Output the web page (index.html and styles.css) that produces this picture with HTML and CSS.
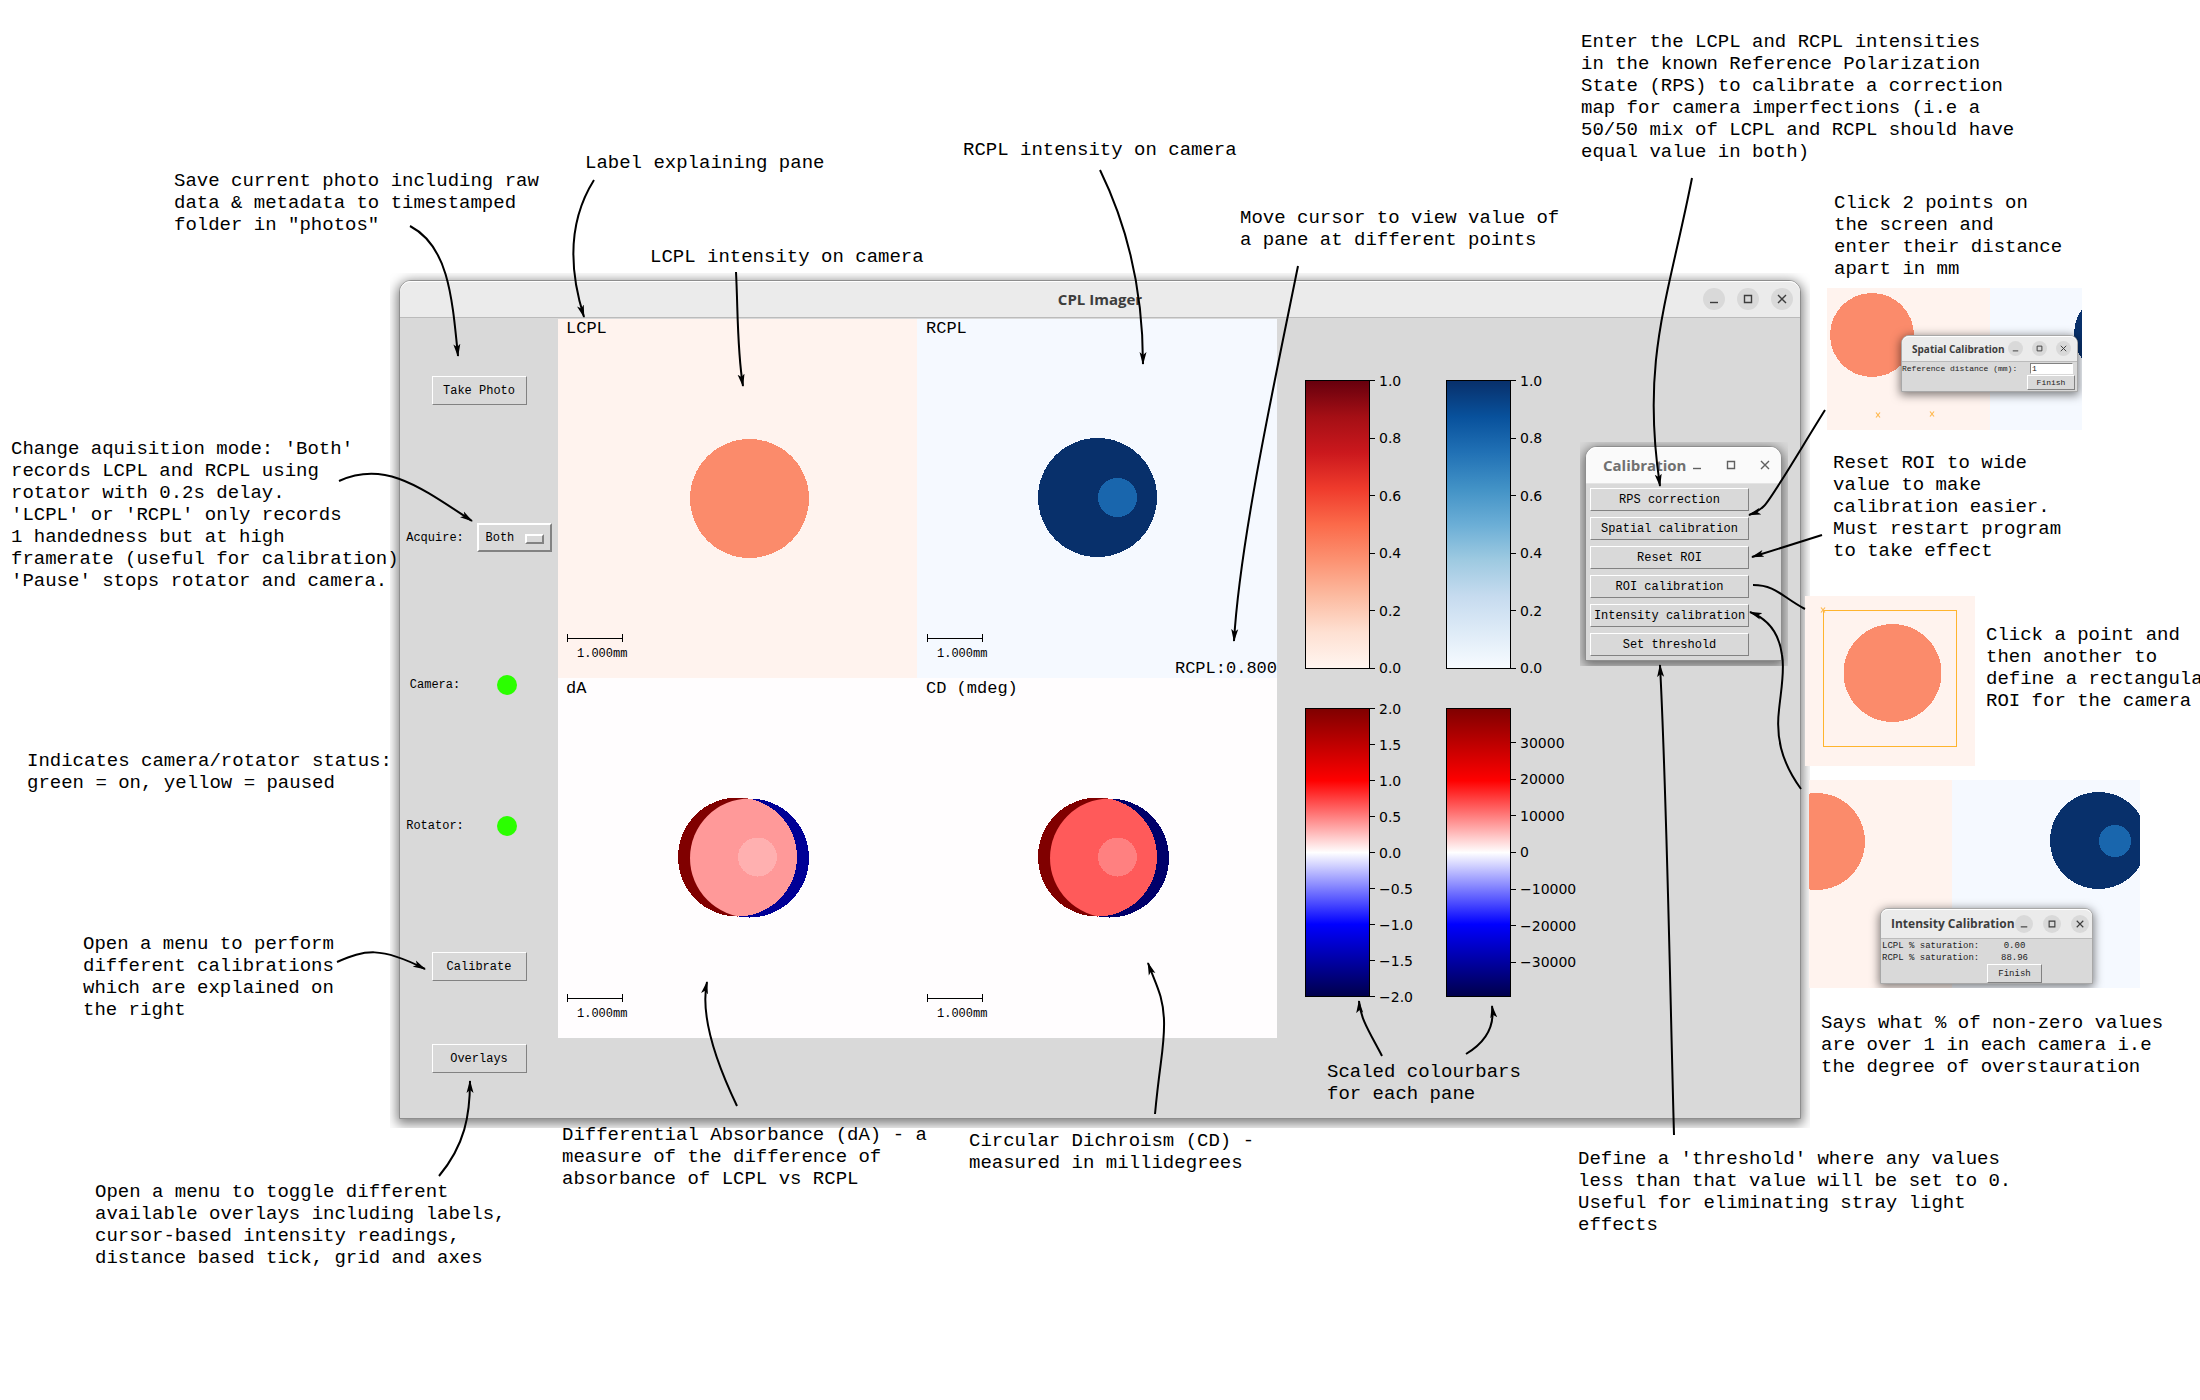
FILE: index.html
```html
<!DOCTYPE html>
<html lang="en">
<head>
<meta charset="utf-8">
<title>CPL Imager guide</title>
<link rel="stylesheet" href="styles.css">
</head>
<body>
<svg class="defs" aria-hidden="true">
  <symbol id="i-min" viewBox="0 0 22 22"><path d="M7 14.500h8"/></symbol>
  <symbol id="i-max" viewBox="0 0 22 22"><path d="M7.500 7.500h7v7h-7z"/></symbol>
  <symbol id="i-close" viewBox="0 0 22 22"><path d="M7 7l8 8M15 7l-8 8"/></symbol>
  <symbol id="i-cross" viewBox="0 0 6 6"><path d="M1 0.500l4 5M5 0.500l-4 5"/></symbol>
</svg>
<main class="canvas">

  <div class="shade shade-main">
    <section class="window main-window">
      <header class="titlebar">
        <h1>CPL Imager</h1>
        <div class="controls">
          <button aria-label="Minimise"><svg><use href="#i-min"/></svg></button>
          <button aria-label="Maximise"><svg><use href="#i-max"/></svg></button>
          <button aria-label="Close"><svg><use href="#i-close"/></svg></button>
        </div>
      </header>
      <div class="workspace">
        <div class="sidebar">
          <div class="row single"><button class="tk">Take Photo</button></div>
          <div class="row">
            <label for="acquire">Acquire:</label>
            <span class="option"><select id="acquire"><option>Both</option><option>LCPL</option><option>RCPL</option><option>Pause</option></select></span>
          </div>
          <div class="row"><span>Camera:</span><i class="lamp"></i></div>
          <div class="row"><span>Rotator:</span><i class="lamp"></i></div>
          <div class="row single"><button class="tk">Calibrate</button></div>
          <div class="row single"><button class="tk">Overlays</button></div>
        </div>

        <div class="panes">
          <svg class="pane warm">
            <circle class="coral" cx="191.500" cy="179.500" r="59.500"/>
            <path class="ruler" d="M9.500 315v8M9.500 319.500h55M64.500 315v8"/>
            <text class="name" x="8" y="14">LCPL</text>
            <text class="unit" x="19" y="338">1.000mm</text>
          </svg>
          <svg class="pane cool">
            <circle class="navy" cx="180.500" cy="178.500" r="59.500"/>
            <circle class="azure" cx="200.500" cy="178.500" r="19.500"/>
            <path class="ruler" d="M10.500 315v8M10.500 319.500h55M65.500 315v8"/>
            <text class="name" x="9" y="14">RCPL</text>
            <text class="unit" x="20" y="338">1.000mm</text>
            <text class="name" x="360" y="354" text-anchor="end">RCPL:0.800</text>
          </svg>
          <svg class="pane">
            <clipPath id="over-a"><circle cx="191.500" cy="180" r="59.500"/></clipPath>
            <circle fill="#000096" cx="191.500" cy="180" r="59.500"/>
            <circle fill="#800000" cx="179.500" cy="179" r="59.500"/>
            <g clip-path="url(#over-a)"><circle fill="#ff9999" cx="179.500" cy="179" r="59.500"/></g>
            <circle fill="#ffb0b0" cx="199.500" cy="179" r="19.500"/>
            <path class="ruler" d="M9.500 316v8M9.500 320.500h55M64.500 316v8"/>
            <text class="name" x="8" y="15">dA</text>
            <text class="unit" x="19" y="339">1.000mm</text>
          </svg>
          <svg class="pane">
            <clipPath id="over-c"><circle cx="192.500" cy="180" r="59.500"/></clipPath>
            <circle fill="#00006a" cx="192.500" cy="180" r="59.500"/>
            <circle fill="#800000" cx="180.500" cy="179" r="59.500"/>
            <g clip-path="url(#over-c)"><circle fill="#ff5a5a" cx="180.500" cy="179" r="59.500"/></g>
            <circle fill="#ff8080" cx="200.500" cy="179" r="19.500"/>
            <path class="ruler" d="M10.500 316v8M10.500 320.500h55M65.500 316v8"/>
            <text class="name" x="9" y="15">CD (mdeg)</text>
            <text class="unit" x="20" y="339">1.000mm</text>
          </svg>
        </div>

        <div class="colourbars">
          <div class="bar"><div class="ramp reds"></div><ol><li>1.0</li><li>0.8</li><li>0.6</li><li>0.4</li><li>0.2</li><li>0.0</li></ol></div>
          <div class="bar"><div class="ramp blues"></div><ol><li>1.0</li><li>0.8</li><li>0.6</li><li>0.4</li><li>0.2</li><li>0.0</li></ol></div>
          <div class="bar"><div class="ramp seismic"></div><ol><li>2.0</li><li>1.5</li><li>1.0</li><li>0.5</li><li>0.0</li><li>−0.5</li><li>−1.0</li><li>−1.5</li><li>−2.0</li></ol></div>
          <div class="bar"><div class="ramp seismic"></div><ol class="inset"><li>30000</li><li>20000</li><li>10000</li><li>0</li><li>−10000</li><li>−20000</li><li>−30000</li></ol></div>
        </div>
      </div>
    </section>
  </div>

  <div class="shade shade-menu">
    <section class="window menu-window">
      <header class="titlebar">
        <h2>Calibration</h2>
        <div class="controls">
          <button aria-label="Minimise"><svg><use href="#i-min"/></svg></button>
          <button aria-label="Maximise"><svg><use href="#i-max"/></svg></button>
          <button aria-label="Close"><svg><use href="#i-close"/></svg></button>
        </div>
      </header>
      <div class="menu">
        <button class="tk">RPS correction</button>
        <button class="tk">Spatial calibration</button>
        <button class="tk">Reset ROI</button>
        <button class="tk">ROI calibration</button>
        <button class="tk">Intensity calibration</button>
        <button class="tk">Set threshold</button>
      </div>
    </section>
  </div>

  <figure class="shot shot-spatial">
    <svg class="scene">
      <rect class="cool-fill" x="163" width="92" height="142"/>
      <circle class="coral" cx="45" cy="47" r="42"/>
      <circle class="navy" cx="289" cy="46" r="42"/>
      <use class="mark" href="#i-cross" x="48" y="124" width="6" height="6"/>
      <use class="mark" href="#i-cross" x="102" y="123" width="6" height="6"/>
    </svg>
    <section class="window dialog spatial">
      <header class="titlebar">
        <h2>Spatial Calibration</h2>
        <div class="controls">
          <button aria-label="Minimise"><svg><use href="#i-min"/></svg></button>
          <button aria-label="Maximise"><svg><use href="#i-max"/></svg></button>
          <button aria-label="Close"><svg><use href="#i-close"/></svg></button>
        </div>
      </header>
      <div class="form">
        <label for="distance">Reference distance (mm):</label>
        <input id="distance" type="text" value="1">
        <button class="tk">Finish</button>
      </div>
    </section>
  </figure>

  <figure class="shot shot-roi">
    <svg class="scene">
      <circle class="coral" cx="87.500" cy="77" r="49"/>
      <rect class="roi" x="18.500" y="14.500" width="133" height="136"/>
      <use class="mark" href="#i-cross" x="15" y="11" width="6" height="6"/>
    </svg>
  </figure>

  <figure class="shot shot-intensity">
    <svg class="scene">
      <rect class="cool-fill" x="143" width="188" height="208"/>
      <circle class="coral" cx="7.500" cy="61.500" r="48.500"/>
      <circle class="navy" cx="289.500" cy="60.500" r="48.500"/>
      <circle class="azure" cx="306" cy="61" r="16"/>
    </svg>
    <section class="window dialog intensity">
      <header class="titlebar">
        <h2>Intensity Calibration</h2>
        <div class="controls">
          <button aria-label="Minimise"><svg><use href="#i-min"/></svg></button>
          <button aria-label="Maximise"><svg><use href="#i-max"/></svg></button>
          <button aria-label="Close"><svg><use href="#i-close"/></svg></button>
        </div>
      </header>
      <div class="form">
        <span>LCPL % saturation:</span><output>0.00</output>
        <span>RCPL % saturation:</span><output>88.96</output>
        <button class="tk">Finish</button>
      </div>
    </section>
  </figure>

  <p class="note n-save">Save current photo including raw
data &amp; metadata to timestamped
folder in "photos"</p>
  <p class="note n-label">Label explaining pane</p>
  <p class="note n-lcpl">LCPL intensity on camera</p>
  <p class="note n-rcpl">RCPL intensity on camera</p>
  <p class="note n-cursor">Move cursor to view value of
a pane at different points</p>
  <p class="note n-rps">Enter the LCPL and RCPL intensities
in the known Reference Polarization
State (RPS) to calibrate a correction
map for camera imperfections (i.e a
50/50 mix of LCPL and RCPL should have
equal value in both)</p>
  <p class="note n-spatial">Click 2 points on
the screen and
enter their distance
apart in mm</p>
  <p class="note n-reset">Reset ROI to wide
value to make
calibration easier.
Must restart program
to take effect</p>
  <p class="note n-roi">Click a point and
then another to
define a rectangular
ROI for the camera</p>
  <p class="note n-intensity">Says what % of non-zero values
are over 1 in each camera i.e
the degree of overstauration</p>
  <p class="note n-mode">Change aquisition mode: 'Both'
records LCPL and RCPL using
rotator with 0.2s delay.
'LCPL' or 'RCPL' only records
1 handedness but at high
framerate (useful for calibration)
'Pause' stops rotator and camera.</p>
  <p class="note n-status">Indicates camera/rotator status:
green = on, yellow = paused</p>
  <p class="note n-calibrate">Open a menu to perform
different calibrations
which are explained on
the right</p>
  <p class="note n-overlays">Open a menu to toggle different
available overlays including labels,
cursor-based intensity readings,
distance based tick, grid and axes</p>
  <p class="note n-da">Differential Absorbance (dA) - a
measure of the difference of
absorbance of LCPL vs RCPL</p>
  <p class="note n-cd">Circular Dichroism (CD) -
measured in millidegrees</p>
  <p class="note n-bars">Scaled colourbars
for each pane</p>
  <p class="note n-threshold">Define a 'threshold' where any values
less than that value will be set to 0.
Useful for eliminating stray light
effects</p>

  <svg class="arrows" aria-hidden="true">
    <marker id="head" markerUnits="userSpaceOnUse" markerWidth="14" markerHeight="8" refX="12" refY="4" orient="auto"><path d="M0 0.500L13 4L0 7.500L3 4z"/></marker>
    <g marker-end="url(#head)">
      <path d="M410 226C448 246 452 295 458 356"/>
      <path d="M594 180C572 215 566 260 584 317"/>
      <path d="M736 272C738 310 737 350 743 386"/>
      <path d="M1100 170C1122 215 1143 280 1143 364"/>
      <path d="M1298 266C1275 380 1240 540 1234 641"/>
      <path d="M339 481C385 460 420 487 472 521"/>
      <path d="M337 962C365 950 380 946 425 969"/>
      <path d="M439 1176C465 1145 470 1115 470 1081"/>
      <path d="M737 1106C715 1060 700 1015 707 982"/>
      <path d="M1155 1114C1160 1060 1165 1045 1164 1020C1163 995 1156 985 1148 963"/>
      <path d="M1382 1056C1370 1033 1360 1018 1359 1001"/>
      <path d="M1466 1054C1486 1042 1495 1026 1492 1006"/>
      <path d="M1692 178C1668 300 1641 360 1660 486"/>
      <path d="M1674 1135C1670 990 1667 800 1660 665"/>
      <path d="M1825 410C1800 450 1772 498 1764 506C1760 510 1755 513 1749 515"/>
      <path d="M1822 535L1752 557"/>
      <path d="M1801 789C1780 760 1776 735 1779 710C1781 690 1785 670 1782 655C1779 632 1768 619 1750 612"/>
    </g>
    <path d="M1753 585C1776 585 1782 597 1805 609"/>
  </svg>
</main>
</body>
</html>
```
FILE: styles.css
```css
* { box-sizing: border-box; }

body { margin: 0; background: #fff; color: #000; }

.defs { display: none; }

/* Free canvas: windows, pictures and notes are pinned on it */
.canvas {
  position: relative;
  width: 100%;
  min-height: max(100vh, 1400px);
  overflow: hidden;
  font-family: "Liberation Mono", monospace;
  font-size: 12px;
}

/* Windows */
.shade { position: absolute; overflow: hidden; }
.shade-main { left: 390px; top: 273px; padding: 7px 9px 9px; }
.shade-menu { left: 1580px; top: 442px; padding: 4px 6px 5px 5px; }

.window {
  background: #d9d9d9;
  border: 1px solid #8e8e8e;
  border-radius: 12px 12px 0 0;
  box-shadow: 0 3px 12px 2px rgba(0, 0, 0, 0.5);
}

.titlebar {
  position: relative;
  display: flex;
  align-items: center;
  background: #ebebeb;
  border-bottom: 1px solid #bbb;
  border-radius: 11px 11px 0 0;
  box-shadow: inset 0 1px 0 #fff;
}
.titlebar h1, .titlebar h2 {
  margin: 0;
  flex: 1;
  color: #3d3d3d;
  font-family: "Open Sans", sans-serif;
  font-size: 15px;
  font-weight: 700;
  line-height: 20px;
  text-align: center;
  white-space: nowrap;
}
.controls { display: flex; gap: 12px; }
.controls button {
  width: 22px;
  height: 22px;
  padding: 0;
  border: 0;
  border-radius: 50%;
  background: #d9d9d9;
  color: #3d3d3d;
}
.controls svg {
  display: block;
  width: 100%;
  height: 100%;
  fill: none;
  stroke: currentColor;
  stroke-width: 1.4;
}

.main-window { width: 1402px; }
.main-window .titlebar { height: 37px; padding: 0 7px 0 97px; }
.workspace {
  display: grid;
  grid-template-columns: 158px 719px 1fr;
  min-height: 800px;
}

/* Raised grey buttons */
.tk {
  padding: 0;
  border: 1px solid;
  border-color: #fff #828282 #828282 #fff;
  background: #d9d9d9;
  color: #000;
  font: inherit;
}

.sidebar {
  display: grid;
  grid-template-rows: 145fr 149fr 146fr 136fr 145fr 39fr 40fr;
}
.row {
  display: grid;
  grid-template-columns: 70px 88px;
  align-items: center;
  justify-items: center;
}
.row.single { grid-template-columns: 1fr; }
.sidebar .tk { width: 95px; height: 29px; }
.lamp {
  width: 20px;
  height: 20px;
  margin-right: 14px;
  border-radius: 50%;
  background: #2bff00;
}
.option { position: relative; }
.option select {
  display: block;
  appearance: none;
  width: 75px;
  height: 29px;
  padding: 0 0 0 7px;
  border: 2px solid;
  border-color: #fff #828282 #828282 #fff;
  border-radius: 0;
  background: #d9d9d9;
  color: #000;
  font: inherit;
}
.option::after {
  content: "";
  position: absolute;
  right: 8px;
  top: 11px;
  width: 15px;
  height: 6px;
  border: 2px solid;
  border-color: #fff #828282 #828282 #fff;
  pointer-events: none;
}

/* Image panes */
.panes {
  display: grid;
  grid-template-columns: 359px 360px;
  grid-template-rows: 359px 360px;
  align-content: start;
  padding-top: 1px;
}
.pane { display: block; width: 100%; height: 100%; background: #fffdfe; }
.pane circle, .scene circle { shape-rendering: crispEdges; }
.warm { background: #fff3ee; }
.cool { background: #f5f9ff; }
.cool-fill { fill: #f5f9ff; }
.coral { fill: #fb8b6b; }
.navy { fill: #08306b; }
.azure { fill: #1966ad; }
.ruler { fill: none; stroke: #000; stroke-width: 1; shape-rendering: crispEdges; }
.name { font-size: 17px; }
.unit { font-size: 12px; }

/* Colour scales */
.colourbars {
  display: grid;
  grid-template-columns: 141px 1fr;
  align-content: start;
  row-gap: 39px;
  padding: 62px 0 0 28px;
}
.bar { display: flex; height: 289px; }
.ramp { width: 65px; border: 1px solid #000; }
.reds { background: linear-gradient(#67000d, #a50f15, #cb181d, #ef3b2c, #fb6a4a, #fc9272, #fcbba1, #fee0d2, #fff5f0); }
.blues { background: linear-gradient(#08306b, #08519c, #2171b5, #4292c6, #6baed6, #9ecae1, #c6dbef, #deebf7, #f7fbff); }
.seismic { background: linear-gradient(#800000, #f00 25%, #fff 50%, #00f 75%, #00004c); }
.bar ol {
  display: flex;
  flex-direction: column;
  justify-content: space-between;
  margin: 0;
  padding: 0;
  list-style: none;
  font-family: "DejaVu Sans", sans-serif;
  font-size: 14px;
}
.bar .inset { padding: 34px 0; }
.bar li { display: flex; align-items: center; gap: 4px; height: 1px; }
.bar li::before { content: ""; width: 5px; height: 1px; background: #000; }

/* Calibration menu */
.menu-window { width: 197px; }
.menu-window .titlebar {
  height: 37px;
  padding: 0 8px 0 17px;
  background: #fafafa;
  border-bottom-color: #e4e4e4;
}
.menu-window h2 { color: #707070; text-align: left; }
.menu-window .controls button { background: none; color: #606060; }
.menu { display: grid; gap: 6px; padding: 4px 32px 4px 4px; }
.menu .tk { height: 23px; }

/* Screenshots of the calibration dialogs */
.shot {
  position: absolute;
  margin: 0;
  overflow: hidden;
  background: #fff3ee;
}
.shot-spatial { left: 1827px; top: 288px; width: 255px; height: 142px; }
.shot-roi { left: 1805px; top: 596px; width: 170px; height: 170px; }
.shot-intensity { left: 1809px; top: 780px; width: 331px; height: 208px; }
.scene { display: block; width: 100%; height: 100%; }
.mark { fill: none; stroke: #ffb84d; stroke-width: 1.2; }
.roi { fill: none; stroke: #ffb42e; }

.dialog {
  position: absolute;
  border-color: #a8a8a8;
  border-radius: 8px 8px 0 0;
  box-shadow: 0 2px 10px 1px rgba(0, 0, 0, 0.5);
}
.dialog .titlebar { border-radius: 7px 7px 0 0; }
.dialog h2 { text-align: left; }
.form { display: grid; align-items: center; color: #222; }
.form .tk { color: #222; }

.spatial { left: 74px; top: 47px; width: 177px; height: 57px; }
.spatial .titlebar { height: 26px; padding: 0 6px 0 10px; }
.spatial h2 { font-size: 10px; }
.spatial .controls { gap: 9px; }
.spatial .controls button { width: 15px; height: 15px; }
.spatial .form {
  grid-template-columns: 125px 48px;
  grid-template-rows: 13px 15px;
  font-size: 8px;
}
.spatial .form label { white-space: nowrap; }
.spatial input {
  width: 43px;
  height: 11px;
  margin-left: 3px;
  padding: 0 0 0 1px;
  border: 1px solid;
  border-color: #828282 #fff #fff #828282;
  background: #fff;
  color: #222;
  font: inherit;
}
.spatial .tk { grid-column: 2; height: 15px; }

.intensity { left: 71px; top: 128px; width: 213px; height: 76px; }
.intensity .titlebar { height: 30px; padding: 0 8px 0 10px; }
.intensity h2 { font-size: 12px; }
.intensity .controls { gap: 10px; }
.intensity .controls button { width: 18px; height: 18px; }
.intensity .form {
  grid-template-columns: 105px 55px;
  grid-template-rows: 13px 12px 19px;
  padding-left: 1px;
  font-size: 9px;
}
.intensity output { text-align: center; }
.intensity .tk { grid-column: 2; height: 19px; }

/* Annotations */
.note {
  position: absolute;
  margin: 0;
  font-size: 19px;
  line-height: 22px;
  white-space: pre;
}
.n-save { left: 174px; top: 170px; }
.n-label { left: 585px; top: 152px; }
.n-lcpl { left: 650px; top: 246px; }
.n-rcpl { left: 963px; top: 139px; }
.n-cursor { left: 1240px; top: 207px; }
.n-rps { left: 1581px; top: 31px; }
.n-spatial { left: 1834px; top: 192px; }
.n-reset { left: 1833px; top: 452px; }
.n-roi { left: 1986px; top: 624px; }
.n-intensity { left: 1821px; top: 1012px; }
.n-mode { left: 11px; top: 438px; }
.n-status { left: 27px; top: 750px; }
.n-calibrate { left: 83px; top: 933px; }
.n-overlays { left: 95px; top: 1181px; }
.n-da { left: 562px; top: 1124px; }
.n-cd { left: 969px; top: 1130px; }
.n-bars { left: 1327px; top: 1061px; }
.n-threshold { left: 1578px; top: 1148px; }

.arrows {
  position: absolute;
  inset: 0;
  width: 100%;
  height: 100%;
  fill: none;
  stroke: #000;
  stroke-width: 2;
  pointer-events: none;
}
.arrows marker path { fill: #000; stroke: none; }
```
